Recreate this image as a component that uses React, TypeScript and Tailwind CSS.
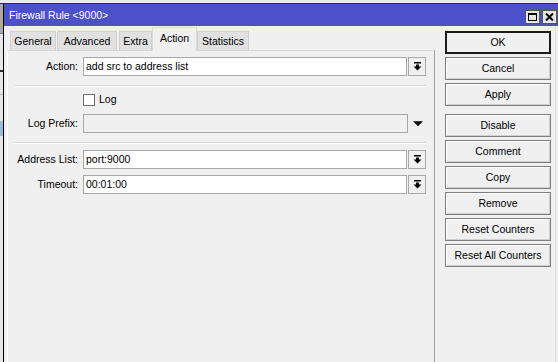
import React from "react";

const sideButtons = [
  { label: "OK", primary: true },
  { label: "Cancel" },
  { label: "Apply" },
  { label: "Disable", gapBefore: true },
  { label: "Comment" },
  { label: "Copy" },
  { label: "Remove" },
  { label: "Reset Counters" },
  { label: "Reset All Counters" },
];

// widths measured from the window so the tab strip lines up
const tabs = [
  { label: "General", cls: "w-[46px]" },
  { label: "Advanced", cls: "ml-[1px] w-[60px]" },
  { label: "Extra", cls: "ml-[2px] w-[33px]" },
  { label: "Action", cls: "w-[45px]", active: true },
  { label: "Statistics", cls: "w-[52px]" },
];

function DropButton() {
  return (
    <div className="ml-[1px] w-[18px] h-[19px] border border-[#a8a8a8] bg-[#f0f0f0] flex items-center justify-center">
      <svg width="9" height="9" viewBox="0 0 9 9">
        <rect x="1" y="0" width="7" height="1.5" fill="#000" />
        <path d="M3 2.5h3v2h2.5L4.5 8.5 0.5 4.5H3z" fill="#000" />
      </svg>
    </div>
  );
}

function Field({ label, value, disabled }: { label: string; value?: string; disabled?: boolean }) {
  return (
    <div className="flex items-center h-[19px]">
      <div className="w-[70px] text-right text-black">{label}</div>
      <div
        className={`ml-[5px] h-[19px] border border-[#a8a8a8] flex items-center pl-[2px] text-black ${
          disabled ? "w-[325px] bg-[#f0f0f0]" : "w-[324px] bg-white"
        }`}
      >
        {value}
      </div>
      {disabled ? (
        <div className="ml-[5px] w-[10px] flex justify-center">
          <svg width="11" height="6" viewBox="0 0 11 6">
            <path d="M0 0h11L5.5 5.5z" fill="#000" />
          </svg>
        </div>
      ) : (
        <DropButton />
      )}
    </div>
  );
}

function Separator() {
  return <div className="ml-[7px] w-[411px] h-[2px] border-t border-[#d5d5d5] border-b border-b-white" />;
}

export default function App() {
  return (
    <div className="w-[558px] h-[362px] bg-[#f0f0f0] overflow-hidden flex flex-col font-['Liberation_Sans',Arial,sans-serif] text-[10.5px] leading-none">
      <div className="h-[3px] bg-[#ebebeb]" />
      <div className="flex flex-1 border-t border-[#2e2e2e]">
        {/* background window peeking out */}
        <div className="w-[3px] flex flex-col bg-[#e6e6e6]">
          <div className="h-[29px] bg-[#a9a9a9]" />
          <div className="h-[1px] bg-[#7a7a7a]" />
          <div className="h-[36px]" />
          <div className="h-[2px] bg-[#333]" />
          <div className="h-[22px]" />
          <div className="h-[1px] bg-[#b0b0b0]" />
          <div className="h-[26px]" />
          <div className="h-[15px] bg-[#9fb8de]" />
          <div className="flex-1" />
        </div>
        <div className="flex-1 flex flex-col border-l border-black">
          {/* title bar */}
          <div className="h-[22px] bg-[#4c50c9] flex items-center pl-[5px] pr-[1px]">
            <span className="text-white text-[10.5px]">Firewall Rule &lt;9000&gt;</span>
            <div className="ml-auto flex gap-[2px] mt-[4px]">
              <div className="w-[15px] h-[14px] bg-[#e6e6e6] border border-[#555] flex items-center justify-center">
                <div className="w-[9px] h-[8px] border border-black border-t-2" />
              </div>
              <div className="w-[15px] h-[14px] bg-[#e6e6e6] border border-[#555] flex items-center justify-center">
                <svg width="9" height="8" viewBox="0 0 9 8">
                  <path d="M1 0.5L8 7.5M8 0.5L1 7.5" stroke="#000" strokeWidth="2" />
                </svg>
              </div>
            </div>
          </div>

          <div className="flex flex-1 pl-[3px]">
            {/* tabs and panel */}
            <div className="w-[428px] flex flex-col">
              <div className="h-[24px] flex items-end pl-[3px]">
                {tabs.map((t) =>
                  t.active ? (
                    <div
                      key={t.label}
                      className={`relative z-10 -mb-[1px] h-[24px] pb-[3px] bg-[#f0f0f0] border border-b-0 border-[#d9d9d9] flex items-center justify-center text-black ${t.cls}`}
                    >
                      {t.label}
                    </div>
                  ) : (
                    <div
                      key={t.label}
                      className={`h-[19px] bg-[#e1e1e1] border border-b-0 border-[#d0d0d0] flex items-center justify-center pt-[1px] text-black ${t.cls}`}
                    >
                      {t.label}
                    </div>
                  )
                )}
              </div>
              <div className="flex-1 border-l border-t border-r border-l-white border-t-[#d9d9d9] border-r-[#a0a0a0] pt-[6px] flex flex-col">
                <Field label="Action:" value="add src to address list" />
                <div className="mt-[9px]" />
                <Separator />
                <div className="mt-[6px] flex items-center h-[13px]">
                  <div className="ml-[75px] w-[12px] h-[12px] border border-[#6e6e6e] bg-white" />
                  <span className="ml-[4px] text-black">Log</span>
                </div>
                <div className="mt-[8px]" />
                <Field label="Log Prefix:" disabled />
                <div className="mt-[9px]" />
                <Separator />
                <div className="mt-[6px]" />
                <Field label="Address List:" value="port:9000" />
                <div className="mt-[6px]" />
                <Field label="Timeout:" value="00:01:00" />
              </div>
            </div>

            {/* action buttons */}
            <div className="ml-[10px] w-[106px] pt-[5px] flex flex-col">
              {sideButtons.map((b) => (
                <div
                  key={b.label}
                  className={`h-[23px] flex items-center justify-center text-black bg-[#f0f0f0] ${
                    b.gapBefore ? "mt-[8px]" : b.primary ? "" : "mt-[3px]"
                  } ${
                    b.primary
                      ? "border-2 border-[#1c1c1c]"
                      : "border border-[#7d7d7d] shadow-[inset_1px_1px_0_#ffffff,inset_-1px_-1px_0_#d0d0d0]"
                  }`}
                >
                  {b.label}
                </div>
              ))}
            </div>
            <div className="ml-auto w-[3px] border-l border-[#dadada]" />
          </div>
        </div>
      </div>
    </div>
  );
}
